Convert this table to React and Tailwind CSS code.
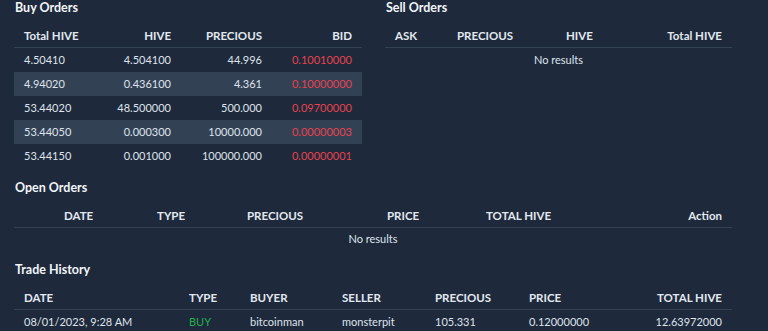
import React from 'react';

const buyOrders = [
  ['4.50410', '4.504100', '44.996', '0.10010000'],
  ['4.94020', '0.436100', '4.361', '0.10000000'],
  ['53.44020', '48.500000', '500.000', '0.09700000'],
  ['53.44050', '0.000300', '10000.000', '0.00000003'],
  ['53.44150', '0.001000', '100000.000', '0.00000001'],
];

const Title = ({ children }) => (
  <h2 className="text-[12.5px] leading-[16px] font-bold text-slate-100 mb-[8px] pl-[1px]">{children}</h2>
);

const headCls = 'h-[24px] items-center border-b border-[#334155] font-bold text-[11.5px] text-slate-200';

const App = () => {
  return (
    <div className="min-h-screen bg-[#1e293b] text-[#dfe4ec] text-[11px] pl-[14px] pr-[36px]" style={{ fontFamily: 'Lato, "Open Sans", sans-serif' }}>
      <div className="w-[718px]">
        <div className="flex gap-[23px] mb-[12px]">
          <section className="w-[348px]">
            <Title>Buy Orders</Title>
            <div className={`grid grid-cols-[77px_90px_91px_90px] ${headCls}`}>
              <div className="pl-[10px]">Total HIVE</div>
              <div className="text-right pr-[10px]">HIVE</div>
              <div className="text-right pr-[10px]">PRECIOUS</div>
              <div className="text-right pr-[10px]">BID</div>
            </div>
            {buyOrders.map((r, i) => (
              <div key={i} className={`grid grid-cols-[77px_90px_91px_90px] h-[24px] items-center ${i % 2 === 1 ? 'bg-[#334155]' : ''}`}>
                <div className="pl-[10px]">{r[0]}</div>
                <div className="text-right pr-[10px]">{r[1]}</div>
                <div className="text-right pr-[10px]">{r[2]}</div>
                <div className="text-right pr-[10px] text-[#e5424d]">{r[3]}</div>
              </div>
            ))}
          </section>
          <section className="w-[347px]">
            <Title>Sell Orders</Title>
            <div className={`grid grid-cols-[62px_109px_88px_88px] ${headCls}`}>
              <div className="pl-[10px]">ASK</div>
              <div className="pl-[10px]">PRECIOUS</div>
              <div className="pl-[10px]">HIVE</div>
              <div className="text-right pr-[10px]">Total HIVE</div>
            </div>
            <div className="h-[24px] flex items-center justify-center">No results</div>
          </section>
        </div>

        <section className="mb-[12px]">
          <Title>Open Orders</Title>
          <div className={`grid grid-cols-[133px_90px_140px_99px_1fr_auto] ${headCls}`}>
            <div className="pl-[50px]">DATE</div>
            <div className="pl-[10px]">TYPE</div>
            <div className="pl-[10px]">PRECIOUS</div>
            <div className="pl-[10px]">PRICE</div>
            <div className="pl-[10px]">TOTAL HIVE</div>
            <div className="text-right pr-[10px]">Action</div>
          </div>
          <div className="h-[22px] flex items-center justify-center">No results</div>
        </section>

        <section>
          <Title>Trade History</Title>
          <div className={`grid grid-cols-[165px_61px_92px_93px_94px_1fr_auto] ${headCls}`}>
            <div className="pl-[10px]">DATE</div>
            <div className="pl-[10px]">TYPE</div>
            <div className="pl-[10px]">BUYER</div>
            <div className="pl-[10px]">SELLER</div>
            <div className="pl-[10px]">PRECIOUS</div>
            <div className="pl-[10px]">PRICE</div>
            <div className="text-right pr-[10px]">TOTAL HIVE</div>
          </div>
          <div className="grid grid-cols-[165px_61px_92px_93px_94px_1fr_auto] h-[24px] items-center">
            <div className="pl-[10px]">08/01/2023, 9:28 AM</div>
            <div className="pl-[10px] text-[#22b14c]">BUY</div>
            <div className="pl-[10px]">bitcoinman</div>
            <div className="pl-[10px]">monsterpit</div>
            <div className="pl-[10px]">105.331</div>
            <div className="pl-[10px]">0.12000000</div>
            <div className="text-right pr-[10px]">12.63972000</div>
          </div>
        </section>
      </div>
    </div>
  );
};

export default App;
